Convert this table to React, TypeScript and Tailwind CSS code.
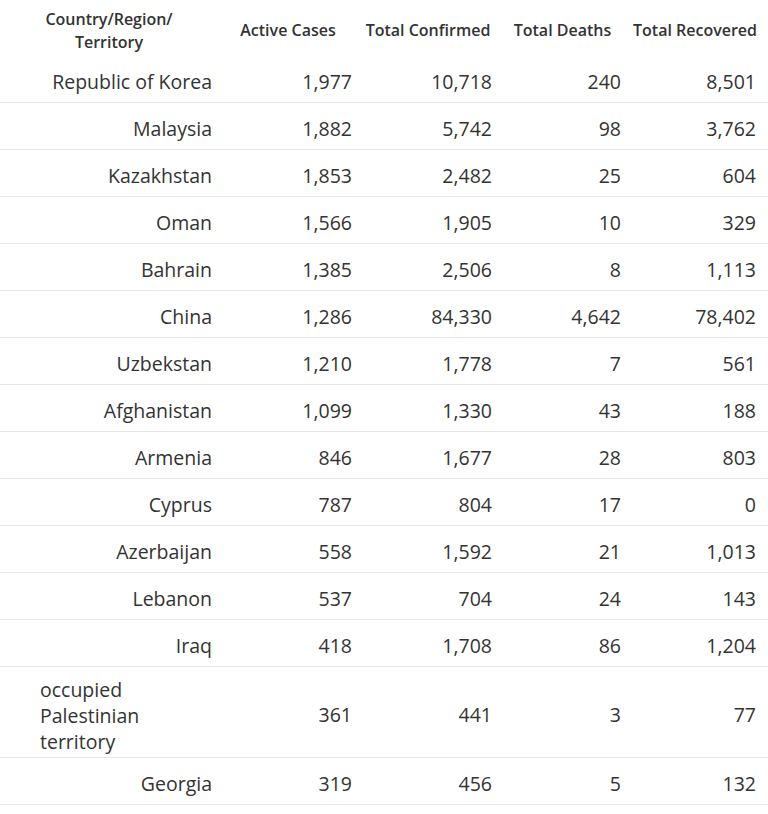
import React from 'react';

type Row = {
    country: string[];
    active: string;
    confirmed: string;
    deaths: string;
    recovered: string;
};

const rows: Row[] = [
    { country: ['Republic of Korea'], active: '1,977', confirmed: '10,718', deaths: '240', recovered: '8,501' },
    { country: ['Malaysia'], active: '1,882', confirmed: '5,742', deaths: '98', recovered: '3,762' },
    { country: ['Kazakhstan'], active: '1,853', confirmed: '2,482', deaths: '25', recovered: '604' },
    { country: ['Oman'], active: '1,566', confirmed: '1,905', deaths: '10', recovered: '329' },
    { country: ['Bahrain'], active: '1,385', confirmed: '2,506', deaths: '8', recovered: '1,113' },
    { country: ['China'], active: '1,286', confirmed: '84,330', deaths: '4,642', recovered: '78,402' },
    { country: ['Uzbekstan'], active: '1,210', confirmed: '1,778', deaths: '7', recovered: '561' },
    { country: ['Afghanistan'], active: '1,099', confirmed: '1,330', deaths: '43', recovered: '188' },
    { country: ['Armenia'], active: '846', confirmed: '1,677', deaths: '28', recovered: '803' },
    { country: ['Cyprus'], active: '787', confirmed: '804', deaths: '17', recovered: '0' },
    { country: ['Azerbaijan'], active: '558', confirmed: '1,592', deaths: '21', recovered: '1,013' },
    { country: ['Lebanon'], active: '537', confirmed: '704', deaths: '24', recovered: '143' },
    { country: ['Iraq'], active: '418', confirmed: '1,708', deaths: '86', recovered: '1,204' },
    { country: ['occupied', 'Palestinian', 'territory'], active: '361', confirmed: '441', deaths: '3', recovered: '77' },
    { country: ['Georgia'], active: '319', confirmed: '456', deaths: '5', recovered: '132' },
];

const App: React.FC = () => {
    return (
        <div className="min-h-[814px] bg-white text-[#333333] font-['Open_Sans','Noto_Sans',sans-serif]">
            <table className="w-full table-fixed border-collapse">
                <colgroup>
                    <col className="w-[218px]" />
                    <col className="w-[140px]" />
                    <col className="w-[140px]" />
                    <col className="w-[129px]" />
                    <col />
                </colgroup>
                <thead>
                    <tr className="h-[55px]">
                        <th className="px-[6px] pt-[6px] text-center align-middle text-[16px] font-semibold leading-[23px]">
                            Country/Region/<br />Territory
                        </th>
                        <th className="whitespace-nowrap px-[6px] pt-[6px] text-center align-middle text-[16px] font-semibold leading-[23px]">Active Cases</th>
                        <th className="whitespace-nowrap px-[6px] pt-[6px] text-center align-middle text-[16px] font-semibold leading-[23px]">Total Confirmed</th>
                        <th className="whitespace-nowrap px-[6px] pt-[6px] text-center align-middle text-[16px] font-semibold leading-[23px]">Total Deaths</th>
                        <th className="whitespace-nowrap pl-[6px] pr-[12px] pt-[6px] text-center align-middle text-[16px] font-semibold leading-[23px]">Total Recovered</th>
                    </tr>
                </thead>
                <tbody>
                    {rows.map((row, i) => {
                        const wrapped = row.country.length > 1;
                        return (
                            <tr key={row.country.join(' ')} className={`border-b border-[#e6e6e6] ${i === 0 ? '' : 'border-t'}`}>
                                <td
                                    className={
                                        wrapped
                                            ? 'h-[47px] pl-[40px] pr-[6px] pt-[10px] pb-[2px] text-left align-middle text-[19.5px] leading-[26px]'
                                            : 'h-[47px] px-[6px] pt-[7px] text-right align-middle text-[19.5px] leading-[26px]'
                                    }
                                >
                                    {row.country.map((line, j) => (
                                        <React.Fragment key={line}>
                                            {j > 0 && <br />}
                                            {line}
                                        </React.Fragment>
                                    ))}
                                </td>
                                <td className="h-[47px] px-[6px] pt-[7px] text-right align-middle text-[19.5px] leading-[26px]">{row.active}</td>
                                <td className="h-[47px] px-[6px] pt-[7px] text-right align-middle text-[19.5px] leading-[26px]">{row.confirmed}</td>
                                <td className="h-[47px] px-[6px] pt-[7px] text-right align-middle text-[19.5px] leading-[26px]">{row.deaths}</td>
                                <td className="h-[47px] pl-[6px] pr-[12px] pt-[7px] text-right align-middle text-[19.5px] leading-[26px]">{row.recovered}</td>
                            </tr>
                        );
                    })}
                </tbody>
            </table>
        </div>
    );
};

export default App;
